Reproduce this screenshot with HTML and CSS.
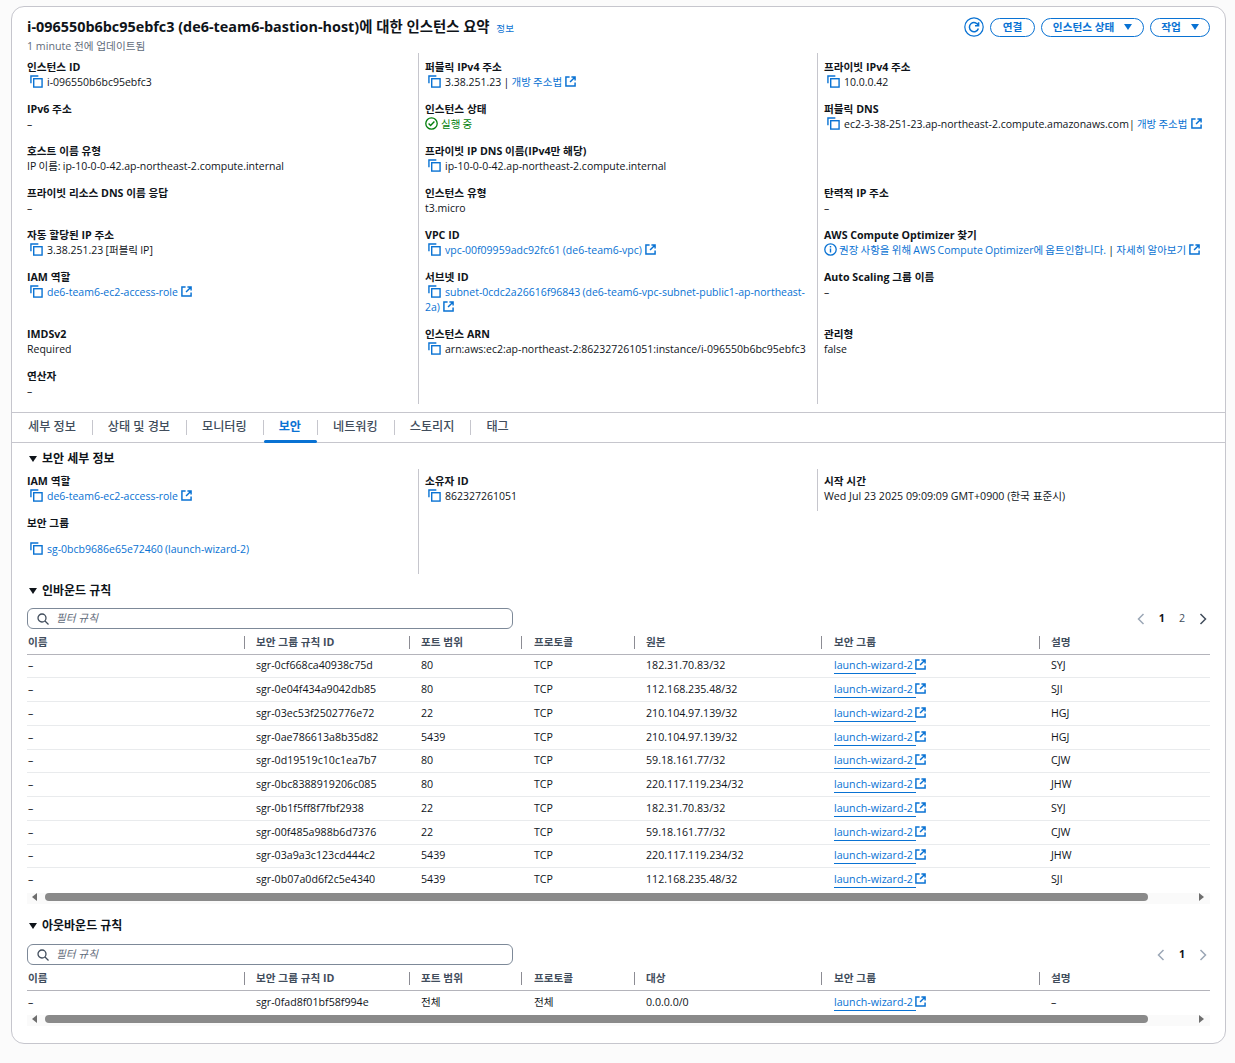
FILE: index.html
```html
<!DOCTYPE html>
<html lang="ko">
<head>
  <meta charset="UTF-8">
  <title>인스턴스 요약</title>
  <link rel="stylesheet" href="styles.css">
</head>
<body>
  <svg class="defs" width="0" height="0">
    <symbol id="copy" viewBox="0 0 14 14">
      <path d="M1 9V1h8" fill="none" stroke="currentColor" stroke-width="1.5"/>
      <rect x="4" y="4" width="9" height="9" fill="none" stroke="currentColor" stroke-width="1.5"/>
    </symbol>
    <symbol id="ext" viewBox="0 0 12 12">
      <path d="M5 1H1v10h10V7M7 1h4v4M11 1L5.5 6.5" fill="none" stroke="currentColor" stroke-width="1.6"/>
    </symbol>
    <symbol id="search" viewBox="0 0 12 12">
      <circle cx="5" cy="5" r="4" fill="none" stroke="currentColor" stroke-width="1.3"/>
      <path d="M8 8l3.5 3.5" fill="none" stroke="currentColor" stroke-width="1.3"/>
    </symbol>
    <symbol id="chev-l" viewBox="0 0 8 12">
      <path d="M6.5 1L1.5 6l5 5" fill="none" stroke="currentColor" stroke-width="1.5"/>
    </symbol>
    <symbol id="chev-r" viewBox="0 0 8 12">
      <path d="M1.5 1l5 5-5 5" fill="none" stroke="currentColor" stroke-width="1.5"/>
    </symbol>
  </svg>

  <div class="card">
    <div class="summary-head">
      <div>
        <h1>i-096550b6bc95ebfc3 (de6-team6-bastion-host)에 대한 인스턴스 요약 <a class="info">정보</a></h1>
        <div class="updated">1 minute 전에 업데이트됨</div>
      </div>
      <div class="actions">
        <button class="refresh">
          <svg width="20" height="20" viewBox="0 0 20 20"><circle cx="10" cy="10" r="9.2" fill="none" stroke="currentColor" stroke-width="1.2"/><path d="M14.3 8.5a4.6 4.6 0 1 0 .1 3M14.6 5.2v3.6H11" fill="none" stroke="currentColor" stroke-width="1.5"/></svg>
        </button>
        <button class="btn btn-connect">연결</button>
        <button class="btn btn-state">인스턴스 상태 <i class="caret"></i></button>
        <button class="btn btn-work">작업 <i class="caret"></i></button>
      </div>
    </div>

    <div class="details">
      <div class="field"><div class="label">인스턴스 ID</div><div class="value"><svg class="ico-copy"><use href="#copy"/></svg>i-096550b6bc95ebfc3</div></div>
      <div class="field"><div class="label">퍼블릭 IPv4 주소</div><div class="value"><svg class="ico-copy"><use href="#copy"/></svg>3.38.251.23 | <a>개방 주소법 <svg class="ico-ext"><use href="#ext"/></svg></a></div></div>
      <div class="field"><div class="label">프라이빗 IPv4 주소</div><div class="value"><svg class="ico-copy"><use href="#copy"/></svg>10.0.0.42</div></div>

      <div class="field"><div class="label">IPv6 주소</div><div class="value">–</div></div>
      <div class="field"><div class="label">인스턴스 상태</div><div class="value status"><svg width="13" height="13" viewBox="0 0 13 13"><circle cx="6.5" cy="6.5" r="5.7" fill="none" stroke="currentColor" stroke-width="1.3"/><path d="M3.6 6.6l2 2 3.8-4" fill="none" stroke="currentColor" stroke-width="1.4"/></svg>실행 중</div></div>
      <div class="field"><div class="label">퍼블릭 DNS</div><div class="value nowrap"><svg class="ico-copy"><use href="#copy"/></svg>ec2-3-38-251-23.ap-northeast-2.compute.amazonaws.com| <a>개방 주소법 <svg class="ico-ext"><use href="#ext"/></svg></a></div></div>

      <div class="field"><div class="label">호스트 이름 유형</div><div class="value">IP 이름: ip-10-0-0-42.ap-northeast-2.compute.internal</div></div>
      <div class="field"><div class="label">프라이빗 IP DNS 이름(IPv4만 해당)</div><div class="value"><svg class="ico-copy"><use href="#copy"/></svg>ip-10-0-0-42.ap-northeast-2.compute.internal</div></div>
      <div class="field"></div>

      <div class="field"><div class="label">프라이빗 리소스 DNS 이름 응답</div><div class="value">–</div></div>
      <div class="field"><div class="label">인스턴스 유형</div><div class="value">t3.micro</div></div>
      <div class="field"><div class="label">탄력적 IP 주소</div><div class="value">–</div></div>

      <div class="field"><div class="label">자동 할당된 IP 주소</div><div class="value"><svg class="ico-copy"><use href="#copy"/></svg>3.38.251.23 [퍼블릭 IP]</div></div>
      <div class="field"><div class="label">VPC ID</div><div class="value"><svg class="ico-copy"><use href="#copy"/></svg><a>vpc-00f09959adc92fc61 (de6-team6-vpc) <svg class="ico-ext"><use href="#ext"/></svg></a></div></div>
      <div class="field"><div class="label">AWS Compute Optimizer 찾기</div><div class="value nowrap"><a><svg class="ico-info" viewBox="0 0 13 13"><circle cx="6.5" cy="6.5" r="5.7" fill="none" stroke="currentColor" stroke-width="1.3"/><path d="M6.5 5.5v4M6.5 3v1.5" fill="none" stroke="currentColor" stroke-width="1.4"/></svg>권장 사항을 위해 AWS Compute Optimizer에 옵트인합니다.</a> | <a>자세히 알아보기 <svg class="ico-ext"><use href="#ext"/></svg></a></div></div>

      <div class="field"><div class="label">IAM 역할</div><div class="value"><svg class="ico-copy"><use href="#copy"/></svg><a>de6-team6-ec2-access-role <svg class="ico-ext"><use href="#ext"/></svg></a></div></div>
      <div class="field"><div class="label">서브넷 ID</div><div class="value"><svg class="ico-copy"><use href="#copy"/></svg><a>subnet-0cdc2a26616f96843 (de6-team6-vpc-subnet-public1-ap-northeast-2a) <svg class="ico-ext"><use href="#ext"/></svg></a></div></div>
      <div class="field"><div class="label">Auto Scaling 그룹 이름</div><div class="value">–</div></div>

      <div class="field"><div class="label">IMDSv2</div><div class="value">Required</div></div>
      <div class="field"><div class="label">인스턴스 ARN</div><div class="value"><svg class="ico-copy"><use href="#copy"/></svg>arn:aws:ec2:ap-northeast-2:862327261051:instance/i-096550b6bc95ebfc3</div></div>
      <div class="field"><div class="label">관리형</div><div class="value">false</div></div>

      <div class="field"><div class="label">연산자</div><div class="value">–</div></div>
      <div class="field"></div>
      <div class="field"></div>
    </div>

    <div class="tabs">
      <a class="tab">세부 정보</a>
      <a class="tab">상태 및 경보</a>
      <a class="tab">모니터링</a>
      <a class="tab active">보안</a>
      <a class="tab">네트워킹</a>
      <a class="tab">스토리지</a>
      <a class="tab">태그</a>
    </div>

    <div class="panel">
      <h2><i class="tri"></i>보안 세부 정보</h2>
      <div class="details sec-details">
        <div class="field">
          <div class="label">IAM 역할</div>
          <div class="value"><svg class="ico-copy"><use href="#copy"/></svg><a>de6-team6-ec2-access-role <svg class="ico-ext"><use href="#ext"/></svg></a></div>
          <div class="label sec-label">보안 그룹</div>
          <div class="value sec-value"><svg class="ico-copy"><use href="#copy"/></svg><a>sg-0bcb9686e65e72460 (launch-wizard-2)</a></div>
        </div>
        <div class="field"><div class="label">소유자 ID</div><div class="value"><svg class="ico-copy"><use href="#copy"/></svg>862327261051</div></div>
        <div class="field field-short"><div class="label">시작 시간</div><div class="value">Wed Jul 23 2025 09:09:09 GMT+0900 (한국 표준시)</div></div>
      </div>

      <h2 class="rules-title"><i class="tri"></i>인바운드 규칙</h2>
      <div class="filter-row">
        <div class="filter"><svg class="ico-search"><use href="#search"/></svg><span>필터 규칙</span></div>
        <div class="pager">
          <svg class="chev off"><use href="#chev-l"/></svg><b>1</b><span>2</span><svg class="chev"><use href="#chev-r"/></svg>
        </div>
      </div>
      <table class="rules">
        <colgroup><col class="c1"><col class="c2"><col class="c3"><col class="c4"><col class="c5"><col class="c6"><col class="c7"></colgroup>
        <thead>
          <tr><th>이름</th><th>보안 그룹 규칙 ID</th><th>포트 범위</th><th>프로토콜</th><th>원본</th><th>보안 그룹</th><th>설명</th></tr>
        </thead>
        <tbody>
          <tr><td>–</td><td>sgr-0cf668ca40938c75d</td><td>80</td><td>TCP</td><td>182.31.70.83/32</td><td><a class="sg">launch-wizard-2 </a><svg class="ico-ext"><use href="#ext"/></svg></td><td>SYJ</td></tr>
          <tr><td>–</td><td>sgr-0e04f434a9042db85</td><td>80</td><td>TCP</td><td>112.168.235.48/32</td><td><a class="sg">launch-wizard-2 </a><svg class="ico-ext"><use href="#ext"/></svg></td><td>SJI</td></tr>
          <tr><td>–</td><td>sgr-03ec53f2502776e72</td><td>22</td><td>TCP</td><td>210.104.97.139/32</td><td><a class="sg">launch-wizard-2 </a><svg class="ico-ext"><use href="#ext"/></svg></td><td>HGJ</td></tr>
          <tr><td>–</td><td>sgr-0ae786613a8b35d82</td><td>5439</td><td>TCP</td><td>210.104.97.139/32</td><td><a class="sg">launch-wizard-2 </a><svg class="ico-ext"><use href="#ext"/></svg></td><td>HGJ</td></tr>
          <tr><td>–</td><td>sgr-0d19519c10c1ea7b7</td><td>80</td><td>TCP</td><td>59.18.161.77/32</td><td><a class="sg">launch-wizard-2 </a><svg class="ico-ext"><use href="#ext"/></svg></td><td>CJW</td></tr>
          <tr><td>–</td><td>sgr-0bc8388919206c085</td><td>80</td><td>TCP</td><td>220.117.119.234/32</td><td><a class="sg">launch-wizard-2 </a><svg class="ico-ext"><use href="#ext"/></svg></td><td>JHW</td></tr>
          <tr><td>–</td><td>sgr-0b1f5ff8f7fbf2938</td><td>22</td><td>TCP</td><td>182.31.70.83/32</td><td><a class="sg">launch-wizard-2 </a><svg class="ico-ext"><use href="#ext"/></svg></td><td>SYJ</td></tr>
          <tr><td>–</td><td>sgr-00f485a988b6d7376</td><td>22</td><td>TCP</td><td>59.18.161.77/32</td><td><a class="sg">launch-wizard-2 </a><svg class="ico-ext"><use href="#ext"/></svg></td><td>CJW</td></tr>
          <tr><td>–</td><td>sgr-03a9a3c123cd444c2</td><td>5439</td><td>TCP</td><td>220.117.119.234/32</td><td><a class="sg">launch-wizard-2 </a><svg class="ico-ext"><use href="#ext"/></svg></td><td>JHW</td></tr>
          <tr><td>–</td><td>sgr-0b07a0d6f2c5e4340</td><td>5439</td><td>TCP</td><td>112.168.235.48/32</td><td><a class="sg">launch-wizard-2 </a><svg class="ico-ext"><use href="#ext"/></svg></td><td>SJI</td></tr>
        </tbody>
      </table>
      <div class="hscroll"><i class="arrow-l"></i><div class="thumb"></div><i class="arrow-r"></i></div>

      <h2 class="rules-title out"><i class="tri"></i>아웃바운드 규칙</h2>
      <div class="filter-row">
        <div class="filter"><svg class="ico-search"><use href="#search"/></svg><span>필터 규칙</span></div>
        <div class="pager">
          <svg class="chev off"><use href="#chev-l"/></svg><b>1</b><svg class="chev off"><use href="#chev-r"/></svg>
        </div>
      </div>
      <table class="rules">
        <colgroup><col class="c1"><col class="c2"><col class="c3"><col class="c4"><col class="c5"><col class="c6"><col class="c7"></colgroup>
        <thead>
          <tr><th>이름</th><th>보안 그룹 규칙 ID</th><th>포트 범위</th><th>프로토콜</th><th>대상</th><th>보안 그룹</th><th>설명</th></tr>
        </thead>
        <tbody>
          <tr><td>–</td><td>sgr-0fad8f01bf58f994e</td><td>전체</td><td>전체</td><td>0.0.0.0/0</td><td><a class="sg">launch-wizard-2 </a><svg class="ico-ext"><use href="#ext"/></svg></td><td>–</td></tr>
        </tbody>
      </table>
      <div class="hscroll"><i class="arrow-l"></i><div class="thumb"></div><i class="arrow-r"></i></div>
    </div>
  </div>
</body>
</html>
```

FILE: styles.css
```css
* {
  box-sizing: border-box;
}
html, body {
  margin: 0;
  height: 1063px;
  overflow: hidden;
}
body {
  font-family: "Open Sans", "Noto Sans CJK KR", sans-serif;
  font-size: 10.65px;
  line-height: 15px;
  color: #0f141a;
  background: #fbfbfb;
  padding: 6px 9px 0 11px;
}
a {
  color: #0972d3;
}
.defs {
  position: absolute;
}
.card {
  background: #fff;
  border: 1px solid #c6c6cd;
  border-radius: 13px;
  height: 1038px;
}

/* summary header */
.summary-head {
  display: flex;
  justify-content: space-between;
  padding: 10px 15px 0;
  height: 46px;
}
h1 {
  margin: 0;
  font-size: 14.4px;
  line-height: 20px;
  font-weight: 700;
}
.info {
  font-size: 9.6px;
  line-height: 1;
  font-weight: 400;
  margin-left: 3px;
}
.updated {
  color: #5f6b7a;
  line-height: 16px;
  margin-top: 1px;
}
.actions {
  display: flex;
  align-items: center;
  gap: 6px;
  height: 20px;
}
.btn {
  height: 19px;
  padding: 0 0 2px;
  font: 700 10.65px "Open Sans", "Noto Sans CJK KR", sans-serif;
  color: #0972d3;
  background: #fff;
  border: 1.5px solid #0972d3;
  border-radius: 16px;
}
.btn-connect { width: 45px; }
.btn-state { width: 103px; }
.btn-work { width: 60px; }
.refresh {
  width: 20px;
  height: 20px;
  padding: 0;
  border: 0;
  background: none;
  color: #0972d3;
}
.caret {
  display: inline-block;
  width: 0;
  height: 0;
  margin-left: 7px;
  border: 4px solid transparent;
  border-top: 6px solid #0972d3;
  border-bottom: 0;
  vertical-align: 1px;
}

/* key value grid */
.details {
  display: grid;
  grid-template-columns: 391px 399px 1fr;
  margin: 0 15px 8px;
}
.field {
  padding: 7px 0 5px;
  min-height: 42px;
}
.field:nth-child(3n+2), .field:nth-child(3n) {
  border-left: 1px solid #c6c6cd;
  padding-left: 6px;
  padding-right: 6px;
}
.label {
  font-weight: 700;
}
.value {
  font-size: 10.5px;
  word-spacing: -0.5px;
}
.nowrap {
  white-space: nowrap;
}
.ico-copy {
  width: 13px;
  height: 13px;
  color: #0972d3;
  margin: 0 4px 0 3px;
  vertical-align: -2px;
}
.ico-ext {
  width: 11px;
  height: 11px;
  color: #0972d3;
  margin-left: 1px;
  vertical-align: -1px;
}
.ico-info {
  width: 13px;
  height: 13px;
  margin-right: 2px;
  vertical-align: -2px;
}
.status {
  color: #037f0c;
}
.status svg {
  margin-right: 3px;
  vertical-align: -2px;
}

/* tabs */
.tabs {
  display: flex;
  height: 31px;
  align-items: center;
  border-top: 1px solid #c6c6cd;
  border-bottom: 1px solid #c6c6cd;
}
.tab {
  position: relative;
  height: 30px;
  line-height: 27px;
  padding: 0 16px;
  font-size: 12.15px;
  color: #414d5c;
  font-weight: 500;
}
.tab + .tab::before {
  content: "";
  position: absolute;
  left: 0;
  top: 7px;
  height: 15px;
  border-left: 1px solid #c6c6cd;
}
.tab.active {
  color: #0972d3;
  font-weight: 700;
}
.tab.active::after {
  content: "";
  position: absolute;
  left: 1px;
  right: 0;
  bottom: 0;
  height: 3px;
  background: #0972d3;
  border-radius: 2px;
}

/* security panel */
.panel {
  padding: 8px 15px 0;
}
h2 {
  margin: 0;
  font-size: 12px;
  line-height: 16px;
  font-weight: 700;
}
.tri {
  display: inline-block;
  width: 0;
  height: 0;
  margin: 0 5px 0 2px;
  border: 4px solid transparent;
  border-top: 6px solid #0f141a;
  border-bottom: 0;
  vertical-align: 1px;
}
.sec-details {
  margin: 2px 0 0;
}
.sec-details .field {
  min-height: 105px;
  padding-top: 5px;
}
.sec-details .field-short {
  min-height: 42px;
  align-self: start;
}
.field-short .value {
  font-size: 10.65px;
  word-spacing: 0;
}
.sec-label {
  margin-top: 12px;
}
.sec-value {
  margin-top: 11px;
}
.rules-title {
  margin-top: 9px;
}
.rules-title.out {
  margin-top: 14.5px;
}
.filter-row {
  display: flex;
  justify-content: space-between;
  align-items: center;
  margin-top: 9px;
}
.out + .filter-row {
  margin-top: 10px;
}
.filter {
  width: 486px;
  height: 21px;
  border: 1px solid #7d8998;
  border-radius: 6px;
  display: flex;
  align-items: center;
  padding-left: 9px;
  font-style: italic;
  color: #5f6b7a;
}
.ico-search {
  width: 12px;
  height: 12px;
  color: #414d5c;
  margin-right: 7px;
}
.pager {
  display: flex;
  align-items: center;
  gap: 14px;
  padding-right: 3px;
  color: #414d5c;
}
.pager b {
  color: #0f141a;
}
.chev {
  width: 8px;
  height: 12px;
  color: #414d5c;
}
.chev.off {
  color: #9ba7b6;
}

/* rule tables */
.rules {
  width: 100%;
  table-layout: fixed;
  border-collapse: collapse;
  margin-top: 4px;
}
.c1 { width: 217px; }
.c2 { width: 165px; }
.c3 { width: 112px; }
.c4 { width: 113px; }
.c5 { width: 187px; }
.c6 { width: 218px; }
.rules th {
  position: relative;
  height: 21px;
  padding: 0 0 1px 12px;
  text-align: left;
  font-weight: 700;
  color: #414d5c;
  border-bottom: 1px solid #b4b4bb;
}
.rules th:first-child, .rules td:first-child {
  padding-left: 1px;
}
.rules th:nth-child(4), .rules td:nth-child(4),
.rules th:nth-child(6), .rules td:nth-child(6) {
  padding-left: 13px;
}
.rules th + th::before {
  content: "";
  position: absolute;
  left: 0;
  top: 3px;
  height: 13px;
  border-left: 1px solid #8c8c94;
}
.rules td {
  height: 23.75px;
  padding: 0 0 0 12px;
  border-bottom: 1px solid #e9ebed;
  white-space: nowrap;
}
.rules tr:last-child td {
  border-bottom: 0;
}
.sg {
  text-decoration: none;
  border-bottom: 1px solid #0972d3;
  padding-bottom: 1px;
}
.sg + .ico-ext {
  margin-left: -1px;
}

/* fake horizontal scrollbar */
.hscroll {
  display: flex;
  align-items: center;
  height: 11px;
  margin-top: 1px;
  background: #fafafa;
  padding: 0 6px 3px 5px;
}
.thumb {
  width: 1103px;
  height: 8px;
  background: #8a8a8a;
  border-radius: 4px;
  margin-left: 8px;
}
.arrow-l, .arrow-r {
  width: 0;
  height: 0;
  border: 4px solid transparent;
}
.arrow-l {
  border-left: 0;
  border-right: 5px solid #6e6e6e;
}
.arrow-r {
  border-right: 0;
  border-left: 5px solid #6e6e6e;
  margin-left: auto;
}
```
